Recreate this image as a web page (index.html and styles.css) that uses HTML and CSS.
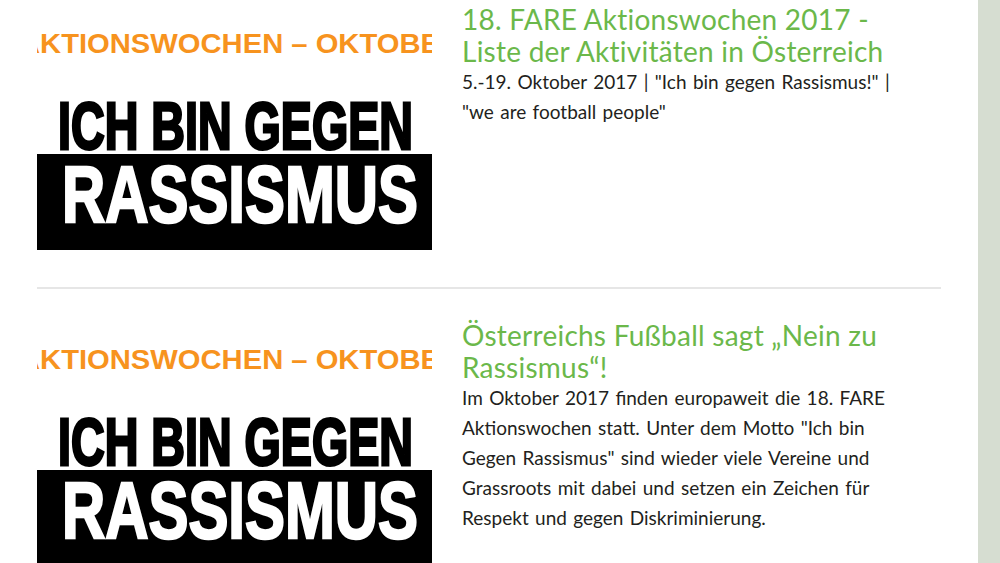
FILE: index.html
```html
<!DOCTYPE html>
<html lang="de">
<head>
<meta charset="utf-8">
<title>FARE Aktionswochen</title>
<link rel="stylesheet" href="styles.css">
</head>
<body>
<div class="page">
  <main class="main">
    <article class="item">
      <div class="thumb">
        <svg width="395" height="263" viewBox="0 0 395 263" xmlns="http://www.w3.org/2000/svg">
          <rect width="395" height="263" fill="#fff"/>
          <text class="t-orange" x="-18" y="53" textLength="442" lengthAdjust="spacingAndGlyphs">AKTIONSWOCHEN – OKTOBER</text>
          <text class="t-black" x="21" y="149" textLength="355" lengthAdjust="spacingAndGlyphs">ICH BIN GEGEN</text>
          <rect x="0" y="154" width="395" height="96" fill="#000"/>
          <text class="t-white" x="25" y="222" textLength="356" lengthAdjust="spacingAndGlyphs">RASSISMUS</text>
        </svg>
      </div>
      <div class="text">
        <h2 class="title">18. FARE Aktionswochen 2017 - Liste der Aktivitäten in Österreich</h2>
        <p class="desc">5.-19. Oktober 2017 | "Ich bin gegen Rassismus!" | "we are football people"</p>
      </div>
    </article>
    <article class="item">
      <div class="thumb">
        <svg width="395" height="263" viewBox="0 0 395 263" xmlns="http://www.w3.org/2000/svg">
          <rect width="395" height="263" fill="#fff"/>
          <text class="t-orange" x="-18" y="53" textLength="442" lengthAdjust="spacingAndGlyphs">AKTIONSWOCHEN – OKTOBER</text>
          <text class="t-black" x="21" y="149" textLength="355" lengthAdjust="spacingAndGlyphs">ICH BIN GEGEN</text>
          <rect x="0" y="154" width="395" height="96" fill="#000"/>
          <text class="t-white" x="25" y="222" textLength="356" lengthAdjust="spacingAndGlyphs">RASSISMUS</text>
        </svg>
      </div>
      <div class="text">
        <h2 class="title">Österreichs Fußball sagt „Nein zu Rassismus“!</h2>
        <p class="desc">Im Oktober 2017 finden europaweit die 18. FARE Aktionswochen statt. Unter dem Motto "Ich bin Gegen Rassismus" sind wieder viele Vereine und Grassroots mit dabei und setzen ein Zeichen für Respekt und gegen Diskriminierung.</p>
      </div>
    </article>
  </main>
  <aside class="sidebar"></aside>
</div>
</body>
</html>
```

FILE: styles.css
```css
html, body {
  margin: 0;
  padding: 0;
  background: #fff;
  overflow: hidden;
}
body {
  font-family: "Lato", "Open Sans", sans-serif;
  color: #231f20;
}
.page {
  display: flex;
  width: 1000px;
  height: 563px;
  overflow: hidden;
}
.main {
  flex: 0 0 904px;
  padding: 0 37px;
}
.sidebar {
  flex: 1;
  background: #d6ddd1;
}
.item {
  display: flex;
  gap: 30px;
  padding-bottom: 24px;
  border-bottom: 2px solid #e6e6e6;
}
.item + .item {
  padding-top: 27px;
  border-bottom: none;
}
.thumb {
  flex: 0 0 395px;
  height: 263px;
  overflow: hidden;
}
.thumb svg {
  display: block;
}
.t-orange {
  font-family: "Liberation Sans", Arial, sans-serif;
  font-weight: 700;
  font-size: 28px;
  fill: #f7931e;
}
.t-black {
  font-family: "Liberation Sans", Arial, sans-serif;
  font-weight: 700;
  font-size: 67px;
  fill: #000;
  stroke: #000;
  stroke-width: 3px;
}
.t-white {
  font-family: "Liberation Sans", Arial, sans-serif;
  font-weight: 700;
  font-size: 79px;
  fill: #fff;
  stroke: #fff;
  stroke-width: 2.5px;
}
.text {
  flex: 0 0 440px;
}
.title {
  margin: 3px 0 0;
  font-size: 28px;
  line-height: 32px;
  font-weight: 400;
  color: #6bb84a;
  letter-spacing: 0.25px;
  font-variant-numeric: tabular-nums;
}
.desc {
  margin: 0;
  font-size: 19px;
  line-height: 30px;
  font-weight: 400;
  word-spacing: 1.5px;
}
```
